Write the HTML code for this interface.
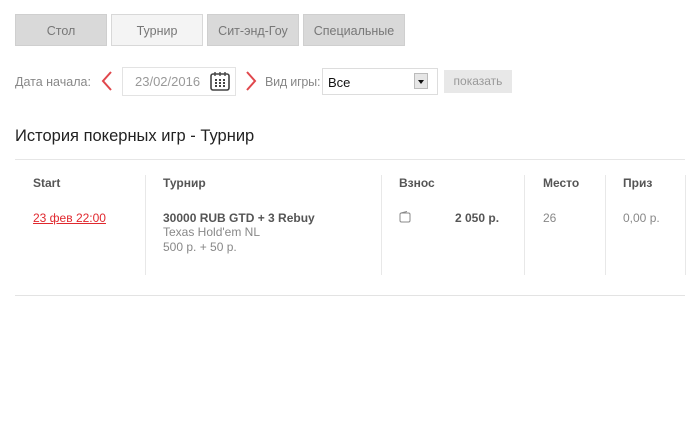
<!DOCTYPE html>
<html><head><meta charset="utf-8"><style>
body{margin:0;width:700px;height:421px;background:#fff;font-family:"Liberation Sans",sans-serif;position:relative;overflow:hidden;color:#555}
.a{position:absolute}
.tab{position:absolute;top:14px;height:32px;line-height:32px;text-align:center;font-size:12.5px;color:#777;background:#d9d9d9;border:1px solid #cfcfcf;box-sizing:border-box}
.t{font-size:12px;color:#888}
.vl{position:absolute;top:175px;height:100px;width:1px;background:#e8e8e8}
.h{position:absolute;top:176px;font-size:12px;font-weight:bold;color:#555}
</style></head><body>
<div class="tab" style="left:15px;width:92px">Стол</div>
<div class="tab" style="left:111px;width:92px;background:#f4f4f4;border-color:#d8d8d8">Турнир</div>
<div class="tab" style="left:207px;width:92px">Сит-энд-Гоу</div>
<div class="tab" style="left:303px;width:102px">Специальные</div>

<div class="a t" style="left:15px;top:75px;font-size:12.5px">Дата начала:</div>
<svg class="a" style="left:100px;top:70px" width="14" height="22"><path d="M11 2 L3 11 L11 20" stroke="#e0474c" stroke-width="2" fill="none"/></svg>
<div class="a" style="left:122px;top:67px;width:114px;height:29px;border:1px solid #e3e3e3;box-sizing:border-box"></div>
<div class="a t" style="left:135px;top:74px;font-size:13px;color:#999">23/02/2016</div>
<svg class="a" style="left:209px;top:70px" width="22" height="22"><rect x="2" y="4" width="18" height="16" rx="2" fill="none" stroke="#444" stroke-width="1.6"/><path d="M6 2v4M11 2v4M16 2v4" stroke="#444" stroke-width="1.4"/><g fill="#444"><rect x="6" y="9" width="2" height="2"/><rect x="10" y="9" width="2" height="2"/><rect x="14" y="9" width="2" height="2"/><rect x="6" y="12" width="2" height="2"/><rect x="10" y="12" width="2" height="2"/><rect x="14" y="12" width="2" height="2"/><rect x="6" y="15" width="2" height="2"/><rect x="10" y="15" width="2" height="2"/><rect x="14" y="15" width="2" height="2"/></g></svg>
<svg class="a" style="left:244px;top:70px" width="14" height="22"><path d="M3 2 L11 11 L3 20" stroke="#e0474c" stroke-width="2" fill="none"/></svg>
<div class="a t" style="left:265px;top:75px;font-size:12.5px;letter-spacing:-0.2px">Вид игры:</div>
<div class="a" style="left:322px;top:68px;width:116px;height:27px;border:1px solid #ddd;box-sizing:border-box;background:#fff"></div>
<div class="a" style="left:328px;top:75px;font-size:13px;color:#111">Все</div>
<div class="a" style="left:414px;top:73px;width:14px;height:16px;background:#e6e6e6;border:1px solid #bbb;box-sizing:border-box"></div>
<div class="a" style="left:418px;top:80px;border:3px solid transparent;border-top:4px solid #111;border-bottom:0"></div>
<div class="a" style="left:444px;top:70px;width:68px;height:23px;background:#e8e8e8;line-height:23px;text-align:center;font-size:12px;color:#999">показать</div>

<div class="a" style="left:15px;top:127px;font-size:16.5px;color:#222">История покерных игр - Турнир</div>
<div class="a" style="left:15px;top:159px;width:670px;height:1px;background:#e6e6e6"></div>

<div class="h" style="left:33px">Start</div>
<div class="h" style="left:163px">Турнир</div>
<div class="h" style="left:399px">Взнос</div>
<div class="h" style="left:543px">Место</div>
<div class="h" style="left:623px">Приз</div>
<div class="vl" style="left:145px"></div>
<div class="vl" style="left:381px"></div>
<div class="vl" style="left:524px"></div>
<div class="vl" style="left:605px"></div>
<div class="vl" style="left:685px"></div>

<div class="a" style="left:33px;top:211px;font-size:12px;color:#e0282e;text-decoration:underline">23 фев 22:00</div>
<div class="a" style="left:163px;top:211px;font-size:12px;font-weight:bold;color:#555">30000 RUB GTD + 3 Rebuy</div>
<div class="a t" style="left:163px;top:225px">Texas Hold'em NL</div>
<div class="a t" style="left:163px;top:240px">500 р. + 50 р.</div>
<svg class="a" style="left:399px;top:211px" width="13" height="12"><rect x="1" y="2" width="10" height="9" rx="1.5" fill="none" stroke="#888"/><path d="M2 2 L8 0.5" stroke="#888"/></svg>
<div class="a" style="left:455px;top:211px;font-size:12px;font-weight:bold;color:#555">2 050 р.</div>
<div class="a t" style="left:543px;top:211px">26</div>
<div class="a t" style="left:623px;top:211px">0,00 р.</div>

<div class="a" style="left:15px;top:295px;width:670px;height:1px;background:#e3e3e3"></div>
</body></html>
